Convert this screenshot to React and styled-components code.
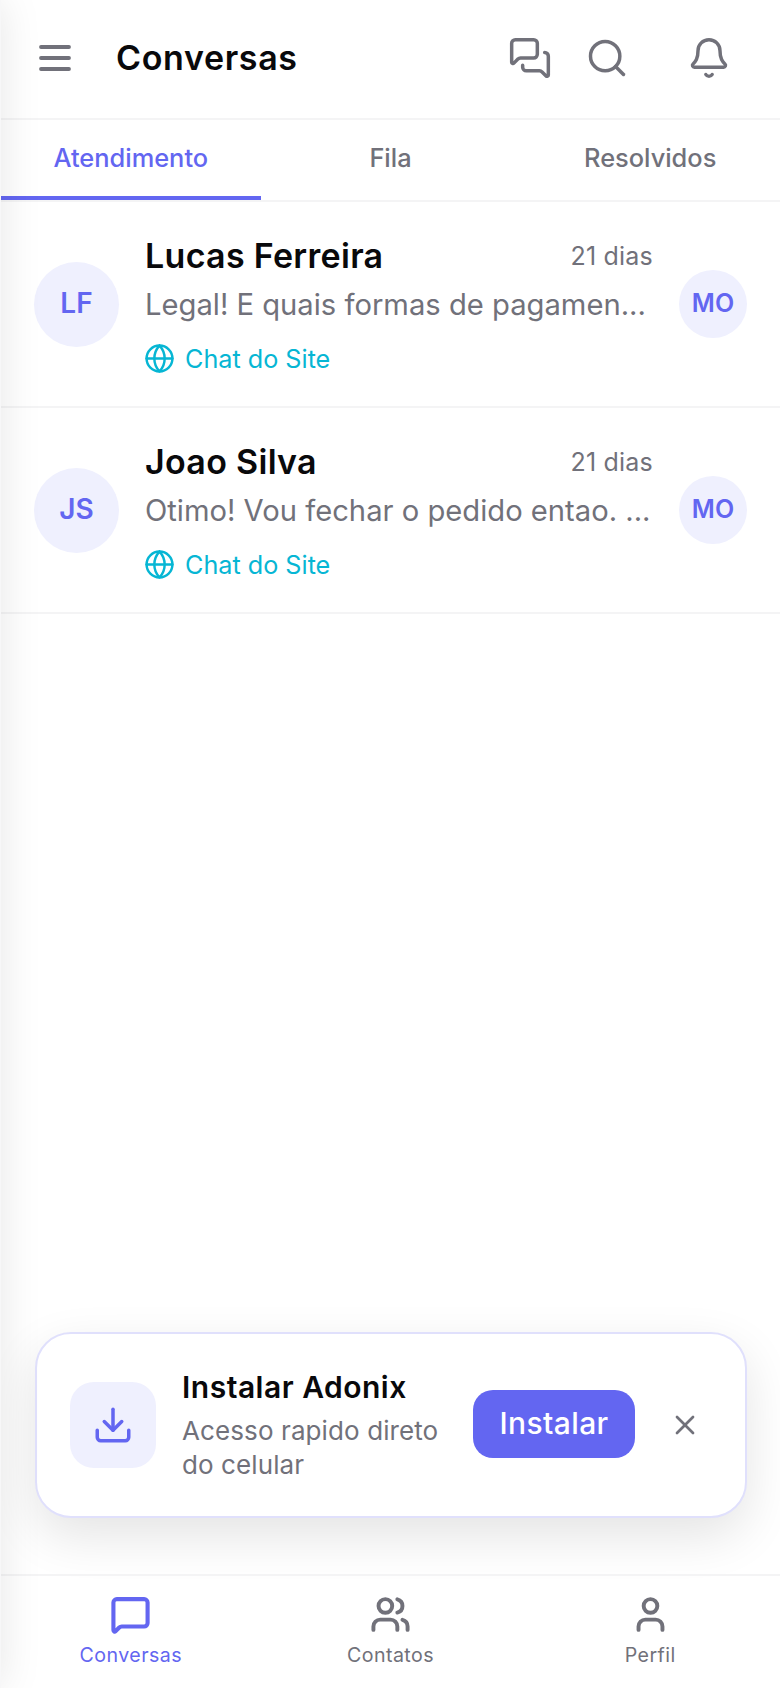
import React from "react";
import styled, { createGlobalStyle } from "styled-components";
import { MessagesSquare, Search, Bell, Globe, Download, X, MessageSquare, Users, User } from "lucide-react";

const Global = createGlobalStyle`
  * { box-sizing: border-box; }
  html, body { margin: 0; padding: 0; background: #fff; }
  body { font-family: Inter, "Liberation Sans", sans-serif; color: #09090b; overflow: hidden; }
`;

const Page = styled.div`
  position: relative;
  width: 780px;
  height: 1688px;
  padding-left: 1px;
  display: flex;
  flex-direction: column;
  overflow: hidden;
`;
// off-canvas drawer, only its shadow shows on the left edge
const Drawer = styled.div`
  position: absolute;
  top: 0;
  left: -599px;
  width: 600px;
  height: 100%;
  background: #f7f7f8;
  box-shadow: 0 0 40px rgba(0, 0, 0, 0.1);
  pointer-events: none;
`;
const Header = styled.header`
  height: 120px;
  flex-shrink: 0;
  display: flex;
  align-items: center;
  padding: 0 49px 2px 32px;
  border-bottom: 2px solid #f4f4f5;
`;
const IconButton = styled.button`
  width: 44px;
  height: 44px;
  padding: 0;
  border: none;
  background: none;
  color: #71717a;
  display: flex;
  align-items: center;
  justify-content: center;
  margin-left: ${(p) => p.$ml || 0}px;
`;
const Title = styled.h1`
  margin: 0 auto 0 39px;
  font-size: 34px;
  font-weight: 600;
  letter-spacing: 0.65px;
  line-height: 40px;
  color: #09090b;
`;
const Tabs = styled.nav`
  height: 82px;
  flex-shrink: 0;
  display: flex;
  border-bottom: 2px solid #f4f4f5;
`;
const Tab = styled.div`
  flex: 1;
  display: flex;
  align-items: center;
  justify-content: center;
  padding-bottom: 2px;
  font-size: 25.4px;
  font-weight: 450;
  color: ${(p) => (p.$active ? "#6366f1" : "#71717a")};
  border-bottom: 4px solid ${(p) => (p.$active ? "#6366f1" : "transparent")};
`;
const Main = styled.main`
  flex: 1;
  min-height: 0;
  display: flex;
  flex-direction: column;
`;
const Row = styled.div`
  height: 206px;
  flex-shrink: 0;
  display: flex;
  align-items: center;
  padding: 0 33px 0 33px;
  border-bottom: 2px solid #f4f4f5;
`;
const Avatar = styled.div`
  width: ${(p) => p.$size}px;
  height: ${(p) => p.$size}px;
  flex-shrink: 0;
  border-radius: 50%;
  background: #eff0fe;
  color: #6366f1;
  display: flex;
  align-items: center;
  justify-content: center;
  padding-bottom: 3px;
  font-size: ${(p) => p.$font}px;
  font-weight: 600;
`;
const Body = styled.div`
  flex: 1;
  min-width: 0;
  margin: 0 26px 0 26px;
  display: flex;
  flex-direction: column;
`;
const TopLine = styled.div`
  display: flex;
  align-items: center;
  justify-content: space-between;
  height: 44px;
`;
const Name = styled.span`
  font-size: 34px;
  font-weight: 600;
  letter-spacing: 0.3px;
  color: #09090b;
`;
const Time = styled.span`
  font-size: 25px;
  letter-spacing: 0.2px;
  color: #71717a;
`;
const Preview = styled.div`
  margin-top: 5px;
  height: 44px;
  line-height: 44px;
  font-size: 29.2px;
  color: #71717a;
  white-space: nowrap;
`;
const Channel = styled.div`
  margin-top: 16px;
  height: 32px;
  display: flex;
  align-items: center;
  gap: 10px;
  font-size: 25.2px;
  color: #06b6d4;
  svg {
    margin-left: -1px;
  }
`;
const Banner = styled.aside`
  margin: auto 33px 56px 34px;
  height: 186px;
  flex-shrink: 0;
  display: flex;
  align-items: center;
  padding: 0 0 0 33px;
  background: #fff;
  border: 2px solid #e0e0fc;
  border-radius: 36px;
  box-shadow: 0 18px 50px rgba(0, 0, 0, 0.11);
`;
const BannerIcon = styled.div`
  width: 86px;
  height: 86px;
  flex-shrink: 0;
  border-radius: 24px;
  background: #eff0fe;
  color: #6366f1;
  display: flex;
  align-items: center;
  justify-content: center;
`;
const BannerText = styled.div`
  margin-left: 26px;
  width: 291px;
  flex-shrink: 0;
`;
const BannerTitle = styled.div`
  font-size: 30px;
  font-weight: 600;
  letter-spacing: 0.5px;
  line-height: 44px;
  margin-top: -3px;
  margin-bottom: 5px;
  color: #09090b;
`;
const BannerDesc = styled.div`
  font-size: 26px;
  line-height: 34px;
  letter-spacing: 0.1px;
  color: #71717a;
`;
const InstallButton = styled.button`
  width: 162px;
  height: 68px;
  flex-shrink: 0;
  margin-bottom: 2px;
  padding: 0 0 3px;
  border: none;
  border-radius: 20px;
  background: #6366f1;
  color: #fff;
  font-family: inherit;
  font-size: 30px;
  font-weight: 550;
  letter-spacing: 0.4px;
`;
const BottomNav = styled.nav`
  height: 114px;
  flex-shrink: 0;
  display: flex;
  border-top: 2px solid #f4f4f5;
`;
const NavItem = styled.div`
  flex: 1;
  display: flex;
  flex-direction: column;
  align-items: center;
  padding-top: 18px;
  gap: 8px;
  font-size: 19.6px;
  font-weight: 400;
  letter-spacing: 0.45px;
  color: ${(p) => (p.$active ? "#6366f1" : "#71717a")};
`;

const conversations = [
  { initials: "LF", name: "Lucas Ferreira", preview: "Legal! E quais formas de pagamen..." },
  { initials: "JS", name: "Joao Silva", preview: "Otimo! Vou fechar o pedido entao. ..." },
];

const MenuIcon = () => (
  <svg width="44" height="44" viewBox="0 0 44 44" fill="none" stroke="currentColor" strokeWidth="3.8" strokeLinecap="round">
    <path d="M8 11h28M8 22h28M8 33h28" />
  </svg>
);

export default function App() {
  return (
    <Page>
      <Global />
      <Drawer />
      <Header>
        <IconButton><MenuIcon /></IconButton>
        <Title>Conversas</Title>
        <IconButton><MessagesSquare size={44} strokeWidth={1.9} /></IconButton>
        <IconButton $ml={33}><Search size={44} strokeWidth={1.9} /></IconButton>
        <IconButton $ml={58}><Bell size={44} strokeWidth={1.9} /></IconButton>
      </Header>
      <Tabs>
        <Tab $active>Atendimento</Tab>
        <Tab>Fila</Tab>
        <Tab>Resolvidos</Tab>
      </Tabs>
      <Main>
        {conversations.map((c) => (
          <Row key={c.initials}>
            <Avatar $size={85} $font={28}>{c.initials}</Avatar>
            <Body>
              <TopLine>
                <Name>{c.name}</Name>
                <Time>21 dias</Time>
              </TopLine>
              <Preview>{c.preview}</Preview>
              <Channel><Globe size={31} strokeWidth={1.9} />Chat do Site</Channel>
            </Body>
            <Avatar $size={68} $font={25}>MO</Avatar>
          </Row>
        ))}
        <Banner>
          <BannerIcon><Download size={42} strokeWidth={2} /></BannerIcon>
          <BannerText>
            <BannerTitle>Instalar Adonix</BannerTitle>
            <BannerDesc>Acesso rapido direto do celular</BannerDesc>
          </BannerText>
          <InstallButton>Instalar</InstallButton>
          <IconButton $ml={28}><X size={32} strokeWidth={2} /></IconButton>
        </Banner>
      </Main>
      <BottomNav>
        <NavItem $active><MessageSquare size={41} strokeWidth={2.4} />Conversas</NavItem>
        <NavItem><Users size={41} strokeWidth={2.3} />Contatos</NavItem>
        <NavItem><User size={41} strokeWidth={2.3} />Perfil</NavItem>
      </BottomNav>
    </Page>
  );
}
